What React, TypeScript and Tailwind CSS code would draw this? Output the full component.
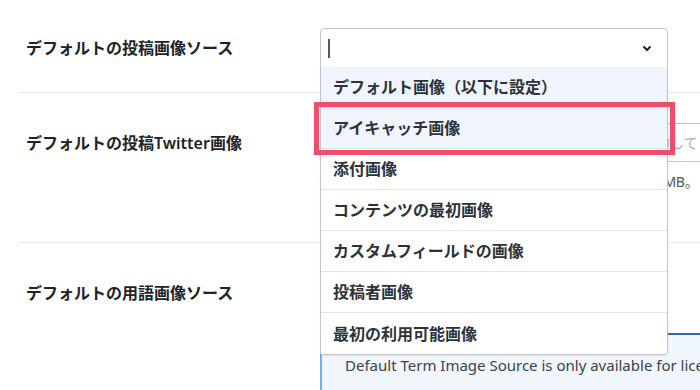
import React from "react";

const items = [
  "デフォルト画像（以下に設定）",
  "アイキャッチ画像",
  "添付画像",
  "コンテンツの最初画像",
  "カスタムフィールドの画像",
  "投稿者画像",
  "最初の利用可能画像",
];

export default function App() {
  return (
    <div className="relative w-[700px] h-[390px] overflow-hidden bg-white pl-[19px] font-['Noto_Sans','Noto_Sans_CJK_JP',sans-serif] text-[#1d2327]">
      {/* Row 1 */}
      <div className="flex h-[93px] border-b border-[#e8e8ea] pt-[28px]">
        <div className="w-[301px] shrink-0 pl-[7px] h-[40px] flex items-center text-[16px] font-semibold">
          デフォルトの投稿画像ソース
        </div>
        <div className="relative w-[348px] h-[40px] border border-[#c3c4c7] rounded-t-[4px] bg-white flex items-center">
          <div className="ml-[7px] w-[2px] h-[19px] bg-[#50575e]" />
          <svg className="absolute right-[15px] top-[16px]" width="10" height="7" viewBox="0 0 10 7">
            <path d="M1.5 1.5 L5 5 L8.5 1.5" fill="none" stroke="#1d2327" strokeWidth="2" />
          </svg>
        </div>
      </div>

      {/* Row 2 */}
      <div className="flex h-[150px] border-b border-[#e8e8ea] pt-[30px]">
        <div className="w-[301px] shrink-0 pl-[7px] h-[39px] flex items-center text-[16px] font-semibold">
          デフォルトの投稿Twitter画像
        </div>
        <div className="flex flex-col shrink-0">
          <div className="w-[420px] h-[39px] border border-[#c3c4c7] rounded-[4px] flex items-center pl-[11px] pr-[8px] text-[14px] text-[#a7aaad] whitespace-nowrap overflow-hidden">
            Twitterカードで使用するデフォルト画像のURLを入力してください
          </div>
          <div className="mt-[9px] text-[14px] text-[#50575e] whitespace-nowrap tracking-[-0.25px]">
            推奨サイズは1200x630ピクセル。最大ファイルサイズ5MB。
          </div>
        </div>
      </div>

      {/* Row 3 */}
      <div className="flex pt-[30px]">
        <div className="w-[301px] shrink-0 pl-[7px] h-[39px] flex items-center text-[16px] font-semibold">
          デフォルトの用語画像ソース
        </div>
        <div className="flex flex-col shrink-0">
          <div className="w-[348px] h-[39px] border border-[#c3c4c7] rounded-[4px]" />
          <div className="mt-[21px] w-[420px] h-[80px] bg-[#f0f6fc] border-l-[2px] border-l-[#72aee6] border-t-[2px] border-t-[#2271b1] pl-[23px] pt-[19px] text-[15px] text-[#3c434a] whitespace-nowrap">
            Default Term Image Source is only available for licensed users.
          </div>
        </div>
      </div>

      {/* Open dropdown list */}
      <div className="absolute left-[320px] top-[67px] w-[348px] bg-white border-x border-b border-[#c3c4c7] rounded-b-[4px] shadow-[0_1px_2px_rgba(0,0,0,0.08)]">
        {items.map((t, i) => (
          <div
            key={t}
            className={
              "h-[41px] flex items-center pl-[12px] text-[16px] font-semibold text-[#2c3338] " +
              (i < items.length - 1 ? "border-b border-[#e4e5e7] " : "") +
              (i < 2 ? "bg-[#f0f5fd]" : "bg-white")
            }
          >
            {t}
          </div>
        ))}
      </div>

      {/* Annotation highlight */}
      <div className="absolute left-[314px] top-[102px] w-[361px] h-[53px] border-[5px] border-[#f04d6a]" />
    </div>
  );
}
